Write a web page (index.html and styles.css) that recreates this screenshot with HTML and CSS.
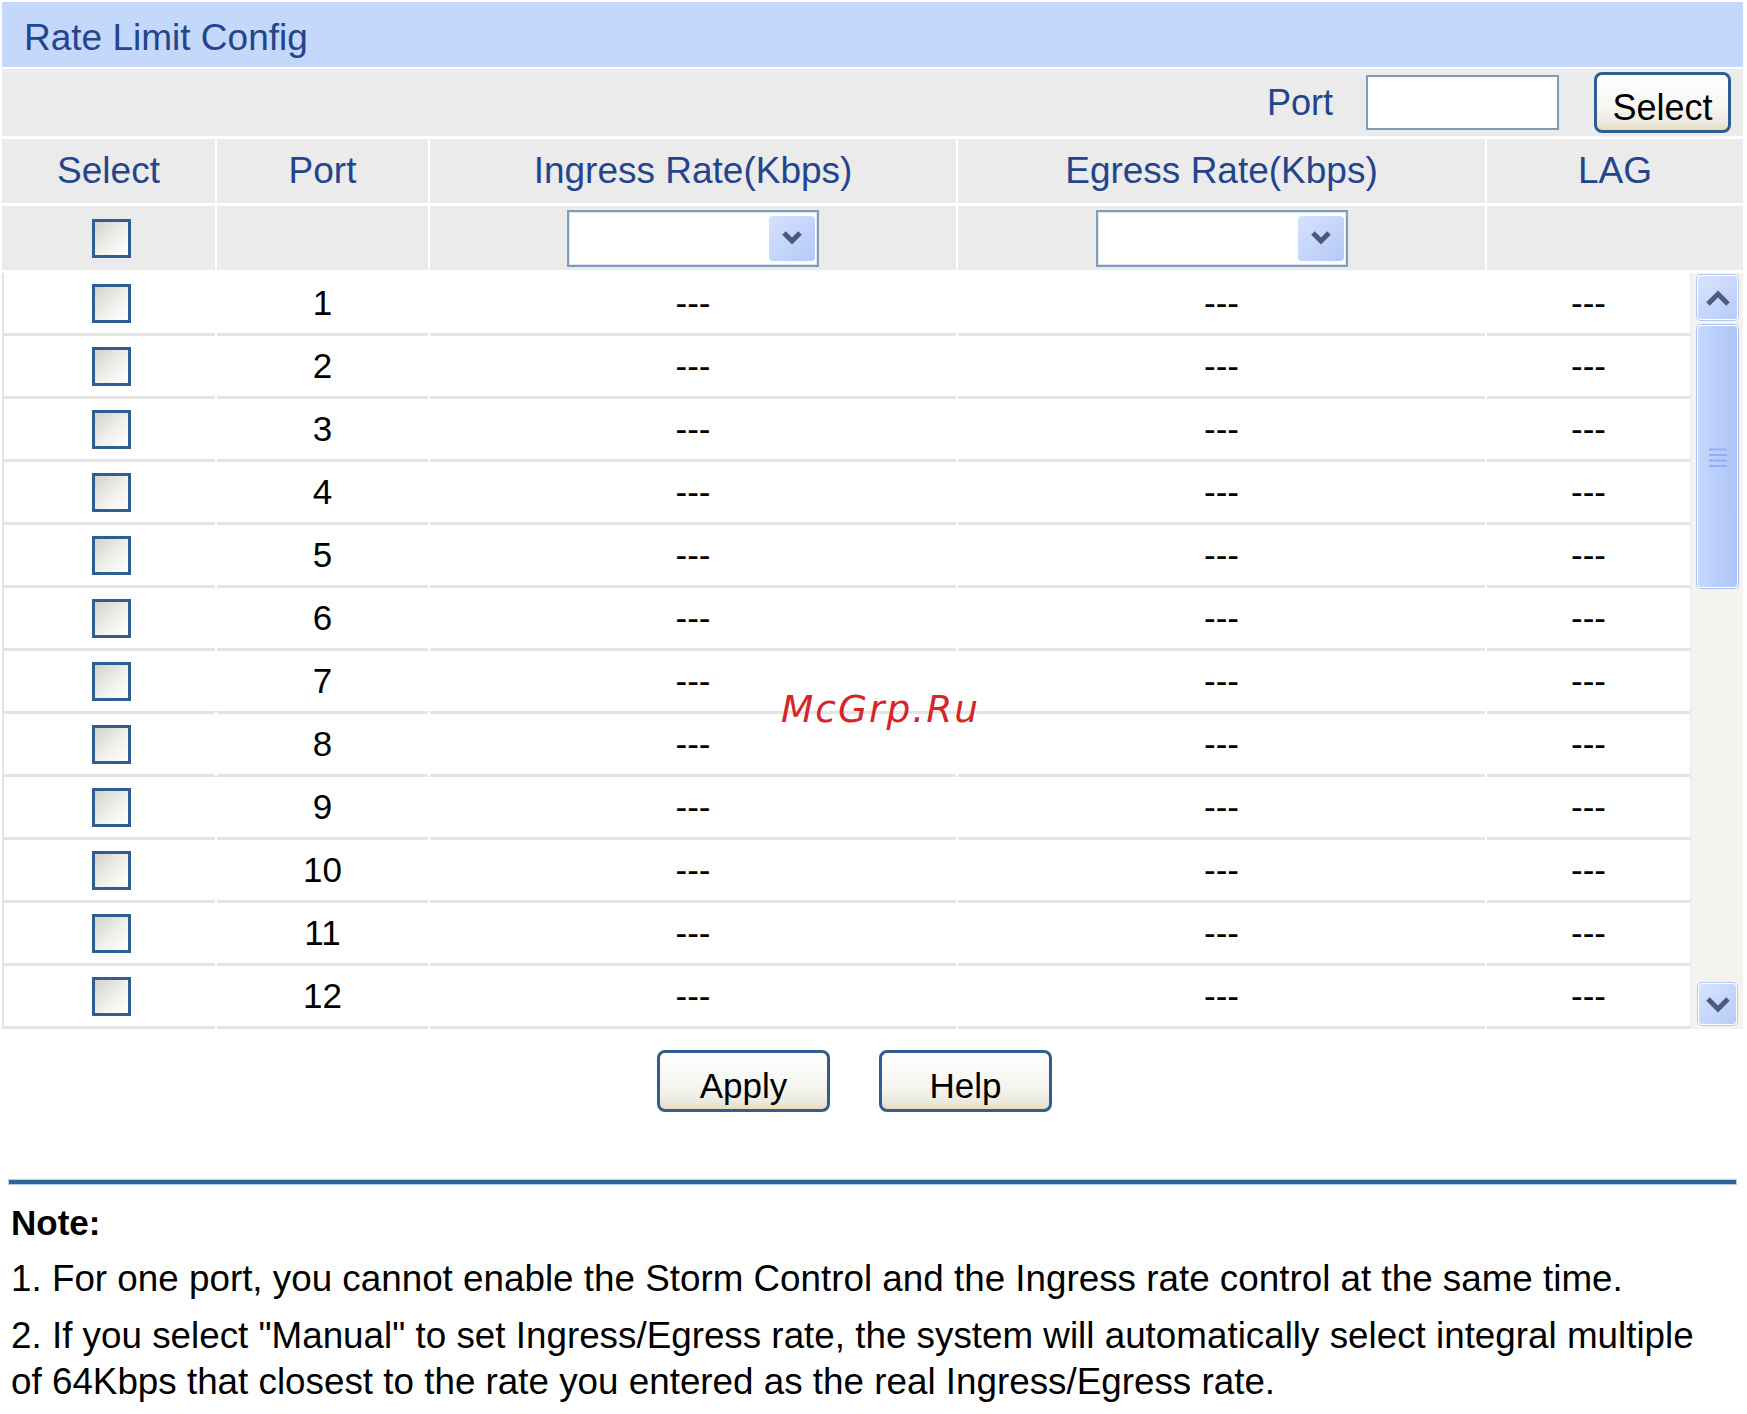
FILE: index.html
```html
<!DOCTYPE html>
<html lang="en">
<head>
  <meta charset="UTF-8" />
  <meta name="viewport" content="width=device-width, initial-scale=1.0" />
  <title>Rate Limit Config</title>
  <link rel="stylesheet" href="styles.css">
</head>
<body>

  <div class="panel">
    <div class="panel-title">Rate Limit Config</div>

    <!-- Port lookup -->
    <div class="toolbar">
      <label class="toolbar-label" for="portInput">Port</label>
      <input id="portInput" class="text-input" type="text">
      <button class="btn btn-select">Select</button>
    </div>

    <div class="cols head-row">
      <div class="cell">Select</div>
      <div class="cell">Port</div>
      <div class="cell">Ingress Rate(Kbps)</div>
      <div class="cell">Egress Rate(Kbps)</div>
      <div class="cell">LAG</div>
    </div>

    <!-- Bulk edit row -->
    <div class="cols filter-row">
      <div class="cell cell-chk"><input type="checkbox" class="chk"></div>
      <div class="cell"></div>
      <div class="cell">
        <div class="dropdown">
          <span class="dropdown-arrow">
            <svg width="24" height="16" viewBox="0 0 24 16"><path d="M4 3 L12 11 L20 3" fill="none" stroke="#4a5a7b" stroke-width="5"/></svg>
          </span>
        </div>
      </div>
      <div class="cell">
        <div class="dropdown">
          <span class="dropdown-arrow">
            <svg width="24" height="16" viewBox="0 0 24 16"><path d="M4 3 L12 11 L20 3" fill="none" stroke="#4a5a7b" stroke-width="5"/></svg>
          </span>
        </div>
      </div>
      <div class="cell"></div>
    </div>

    <div class="data">
      <div class="rows">
        <div class="cols row"><div class="cell cell-chk"><input type="checkbox" class="chk"></div><div class="cell">1</div><div class="cell">---</div><div class="cell">---</div><div class="cell">---</div></div>
        <div class="cols row"><div class="cell cell-chk"><input type="checkbox" class="chk"></div><div class="cell">2</div><div class="cell">---</div><div class="cell">---</div><div class="cell">---</div></div>
        <div class="cols row"><div class="cell cell-chk"><input type="checkbox" class="chk"></div><div class="cell">3</div><div class="cell">---</div><div class="cell">---</div><div class="cell">---</div></div>
        <div class="cols row"><div class="cell cell-chk"><input type="checkbox" class="chk"></div><div class="cell">4</div><div class="cell">---</div><div class="cell">---</div><div class="cell">---</div></div>
        <div class="cols row"><div class="cell cell-chk"><input type="checkbox" class="chk"></div><div class="cell">5</div><div class="cell">---</div><div class="cell">---</div><div class="cell">---</div></div>
        <div class="cols row"><div class="cell cell-chk"><input type="checkbox" class="chk"></div><div class="cell">6</div><div class="cell">---</div><div class="cell">---</div><div class="cell">---</div></div>
        <div class="cols row"><div class="cell cell-chk"><input type="checkbox" class="chk"></div><div class="cell">7</div><div class="cell">---</div><div class="cell">---</div><div class="cell">---</div></div>
        <div class="cols row"><div class="cell cell-chk"><input type="checkbox" class="chk"></div><div class="cell">8</div><div class="cell">---</div><div class="cell">---</div><div class="cell">---</div></div>
        <div class="cols row"><div class="cell cell-chk"><input type="checkbox" class="chk"></div><div class="cell">9</div><div class="cell">---</div><div class="cell">---</div><div class="cell">---</div></div>
        <div class="cols row"><div class="cell cell-chk"><input type="checkbox" class="chk"></div><div class="cell">10</div><div class="cell">---</div><div class="cell">---</div><div class="cell">---</div></div>
        <div class="cols row"><div class="cell cell-chk"><input type="checkbox" class="chk"></div><div class="cell">11</div><div class="cell">---</div><div class="cell">---</div><div class="cell">---</div></div>
        <div class="cols row"><div class="cell cell-chk"><input type="checkbox" class="chk"></div><div class="cell">12</div><div class="cell">---</div><div class="cell">---</div><div class="cell">---</div></div>
      </div>

      <!-- fake XP style scrollbar -->
      <div class="scrollbar">
        <div class="sb-btn sb-up">
          <svg width="28" height="18" viewBox="0 0 28 18"><path d="M4 15 L14 5 L24 15" fill="none" stroke="#4b5c7e" stroke-width="5"/></svg>
        </div>
        <div class="sb-thumb">
          <svg width="20" height="20" viewBox="0 0 20 20">
            <path d="M1 2.5 H19 M1 8 H19 M1 13.5 H19 M1 19 H19" stroke="#8fb0f0" stroke-width="2"/>
          </svg>
        </div>
        <div class="sb-track"></div>
        <div class="sb-btn sb-down">
          <svg width="28" height="18" viewBox="0 0 28 18"><path d="M4 4 L14 14 L24 4" fill="none" stroke="#4b5c7e" stroke-width="5"/></svg>
        </div>
      </div>
    </div>

    <div class="actions">
      <button class="btn btn-wide">Apply</button>
      <button class="btn btn-wide">Help</button>
    </div>
  </div>

  <hr class="rule">

  <div class="note">
    <div class="note-title">Note:</div>
    <p>1. For one port, you cannot enable the Storm Control and the Ingress rate control at the same time.</p>
    <p>2. If you select "Manual" to set Ingress/Egress rate, the system will automatically select integral multiple<br>of 64Kbps that closest to the rate you entered as the real Ingress/Egress rate.</p>
  </div>

  <div class="watermark">McGrp.Ru</div>

</body>
</html>
```

FILE: styles.css
```css
:root {
  --title-blue: #c4d8fb;
  --text-blue: #24458b;
  --bg-gray: #ebebeb;
  --line-gray: #e4e4e4;
  --border-blue: #2f5f90;
  --field-border: #7f9db9;
}

* {
  box-sizing: border-box;
}

body {
  margin: 0;
  font-family: "Liberation Sans", Arial, sans-serif;
  background: #fff;
  color: #000;
}

.panel {
  width: 1741px;
  margin: 2px 0 0 2px;
}

.panel-title {
  height: 65px;
  padding: 6px 0 0 22px;
  background: var(--title-blue);
  color: var(--text-blue);
  font-size: 37px;
  line-height: 59px;
}

.toolbar {
  display: flex;
  align-items: center;
  justify-content: flex-end;
  height: 67px;
  margin-top: 2px;
  padding-right: 12px;
  background: var(--bg-gray);
}

.toolbar-label {
  margin-right: 33px;
  font-size: 36px;
  color: var(--text-blue);
}

.text-input {
  width: 193px;
  height: 55px;
  margin: 0 35px 0 0;
  padding: 0;
  border: 2px solid var(--field-border);
  background: #fff;
}

.btn {
  padding: 10px 0 0;
  border: 3px solid var(--border-blue);
  border-radius: 8px;
  background: linear-gradient(#ffffff, #f5f5f1 60%, #e7e4d8);
  box-shadow: inset 0 -6px 4px -3px rgba(240, 205, 110, 0.35);
  font-family: inherit;
  font-size: 35px;
  color: #000;
  cursor: pointer;
}

.btn-select {
  width: 137px;
  height: 61px;
  font-size: 36px;
}

.btn-wide {
  width: 173px;
  height: 62px;
}

/* shared column layout */
.cols {
  display: grid;
  grid-template-columns: 213px 211px 526px 527px 1fr;
  column-gap: 2px;
}

.cell {
  display: flex;
  align-items: center;
  justify-content: center;
}

.head-row {
  height: 64px;
  margin-top: 3px;
}

.head-row .cell {
  background: var(--bg-gray);
  color: var(--text-blue);
  font-size: 37px;
}

.filter-row {
  height: 64px;
  margin-top: 3px;
}

.filter-row .cell {
  background: var(--bg-gray);
}

.cell-chk {
  padding-left: 6px;
}

.chk {
  -webkit-appearance: none;
  appearance: none;
  width: 39px;
  height: 39px;
  margin: 0;
  border: 3px solid var(--border-blue);
  background: linear-gradient(135deg, #d3d3cb 0%, #f0f0ec 55%, #ffffff 100%);
}

.dropdown {
  display: flex;
  align-items: center;
  justify-content: flex-end;
  width: 252px;
  height: 57px;
  padding-right: 2px;
  border: 2px solid var(--field-border);
  background: #fff;
  box-shadow: inset 0 0 0 1px #dce6f1;
}

.dropdown-arrow {
  display: flex;
  align-items: center;
  justify-content: center;
  width: 46px;
  height: 45px;
  border-radius: 4px;
  background: linear-gradient(135deg, #d6e2fd, #b4c9f8);
}

/* port list */
.data {
  display: flex;
  height: 756px;
  margin-top: 3px;
}

.rows {
  width: 1688px;
}

.row {
  height: 63px;
}

.row .cell {
  border-bottom: 3px solid var(--line-gray);
  font-size: 35px;
}

.row .cell:first-child {
  border-left: 2px solid var(--line-gray);
  padding-left: 4px;
}

.scrollbar {
  flex: 1;
  display: flex;
  flex-direction: column;
  padding: 2px 0 4px 6px;
  border-left: 1px solid #ebeae2;
  background: #f4f3ee;
}

.sb-btn {
  display: flex;
  align-items: center;
  justify-content: center;
  border: 1px solid #fff;
  border-radius: 4px;
  background: linear-gradient(135deg, #d9e4fd, #b6cbf8);
  box-shadow: 0 0 0 1px #b5c8ef;
}

.sb-up {
  width: 41px;
  height: 45px;
}

.sb-down {
  width: 39px;
  height: 42px;
  margin-left: 1px;
}

.sb-thumb {
  display: flex;
  align-items: center;
  justify-content: center;
  width: 41px;
  height: 263px;
  margin-top: 5px;
  border: 1px solid #fff;
  border-radius: 4px;
  background: linear-gradient(90deg, #c9d8fc, #b9cefb 50%, #afc6f7);
  box-shadow: 0 0 0 1px #aac1ef;
}

.sb-track {
  flex: 1;
}

.actions {
  display: flex;
  justify-content: center;
  gap: 49px;
  margin-top: 21px;
  padding-right: 36px;
}

.rule {
  width: 1727px;
  height: 4px;
  margin: 68px 0 0 9px;
  border: none;
  background: #2f6699;
  box-shadow: 0 0 0 1px #b9cde2;
}

.note {
  margin: 16px 0 0 11px;
}

.note-title {
  font-size: 35px;
  font-weight: bold;
  line-height: 46px;
}

.note p {
  margin: 10px 0 0;
  font-size: 36.8px;
  line-height: 46px;
  white-space: nowrap;
}

.note p + p {
  margin-top: 11px;
}

.watermark {
  position: absolute;
  left: 781px;
  top: 691px;
  font-family: "DejaVu Sans", sans-serif;
  font-style: italic;
  font-size: 37.5px;
  line-height: 37px;
  letter-spacing: 2px;
  color: #d7262b;
}
```
